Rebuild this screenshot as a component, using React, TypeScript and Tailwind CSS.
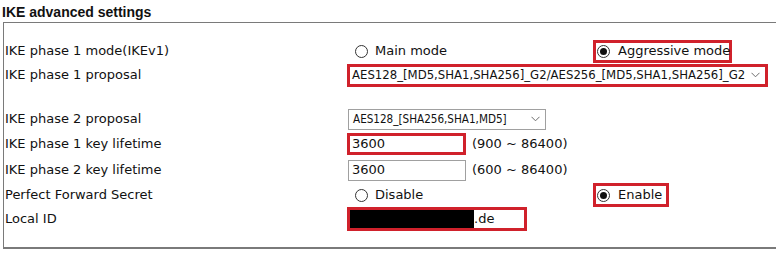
import React from "react";

const RED = "border-[#d0212b]";

function Radio({ checked }: { checked?: boolean }) {
  return (
    <span className="inline-flex w-[13px] h-[13px] rounded-full border border-[#333333] bg-white items-center justify-center shrink-0">
      {checked && <span className="w-[7px] h-[7px] rounded-full bg-[#111111]" />}
    </span>
  );
}

function Chevron() {
  return (
    <svg width="9" height="6" viewBox="0 0 9 6" className="shrink-0">
      <path d="M0.5 0.8 L4.5 4.8 L8.5 0.8" fill="none" stroke="#6d6d6d" strokeWidth="1" />
    </svg>
  );
}

function Row({ label, h, children }: { label?: string; h: string; children?: React.ReactNode }) {
  return (
    <div className={`flex items-center ${h}`}>
      <div className="w-[343px] pl-[1px] shrink-0 whitespace-nowrap">{label}</div>
      <div className="flex items-center flex-1 whitespace-nowrap">{children}</div>
    </div>
  );
}

const COND = { fontFamily: '"DejaVu Sans Condensed", "DejaVu Sans", sans-serif' };

export default function App() {
  return (
    <div
      className="w-[776px] h-[254px] bg-white text-[#111111] overflow-hidden"
      style={{ fontFamily: '"DejaVu Sans", Verdana, sans-serif' }}
    >
      <div
        className="pl-[2px] pt-[4px] h-[22px] text-[14px] font-bold leading-[16px]"
        style={{ fontFamily: '"Liberation Sans", Arial, sans-serif' }}
      >
        IKE advanced settings
      </div>
      <div className="ml-[3px] w-[790px] h-[227px] border border-[#7a7a7a] border-b-2 pt-[16px] text-[13px] leading-[16px]">
        <Row label="IKE phase 1 mode(IKEv1)" h="h-[24px]">
          <div className="w-[246px] flex items-center pl-[8px] gap-[7px]">
            <Radio />
            <span>Main mode</span>
          </div>
          <div className={`w-[139px] h-[23px] border-[3px] ${RED} flex items-center pl-[1px] gap-[8px]`}>
            <Radio checked />
            <span>Aggressive mode</span>
          </div>
        </Row>
        <Row label="IKE phase 1 proposal" h="h-[24px]">
          <div className={`w-[421px] h-[23px] border-[3px] ${RED} bg-white flex items-center justify-between pl-[2px] pr-[5px]`}>
            <span className="text-[13px]" style={COND}>
              AES128_[MD5,SHA1,SHA256]_G2/AES256_[MD5,SHA1,SHA256]_G2
            </span>
            <Chevron />
          </div>
        </Row>
        <Row h="h-[20px]" />
        <Row label="IKE phase 2 proposal" h="h-[24px]">
          <div className="ml-[1px] w-[198px] h-[21px] border border-[#a0a0a0] bg-white flex items-center justify-between pl-[4px] pr-[5px]">
            <span className="text-[11.6px]" style={COND}>
              AES128_[SHA256,SHA1,MD5]
            </span>
            <Chevron />
          </div>
        </Row>
        <Row label="IKE phase 1 key lifetime" h="h-[26px]">
          <div className={`w-[119px] h-[22px] border-[3px] ${RED} bg-white flex items-center pl-[2px]`}>
            3600
          </div>
          <span className="ml-[6px]">(900 ~ 86400)</span>
        </Row>
        <Row label="IKE phase 2 key lifetime" h="h-[26px]">
          <div className="ml-[1px] w-[118px] h-[21px] border border-[#a0a0a0] bg-white flex items-center pl-[3px]">
            3600
          </div>
          <span className="ml-[6px]">(600 ~ 86400)</span>
        </Row>
        <Row label="Perfect Forward Secret" h="h-[24px]">
          <div className="w-[246px] flex items-center pl-[8px] gap-[7px]">
            <Radio />
            <span>Disable</span>
          </div>
          <div className={`w-[76px] h-[24px] border-[3px] ${RED} flex items-center pl-[1px] gap-[8px]`}>
            <Radio checked />
            <span>Enable</span>
          </div>
        </Row>
        <Row label="Local ID" h="h-[24px]">
          <div className={`w-[180px] h-[24px] border-[3px] ${RED} bg-white flex items-stretch`}>
            <span className="w-[124px] bg-black" />
            <span className="flex items-center">.de</span>
          </div>
        </Row>
      </div>
    </div>
  );
}
